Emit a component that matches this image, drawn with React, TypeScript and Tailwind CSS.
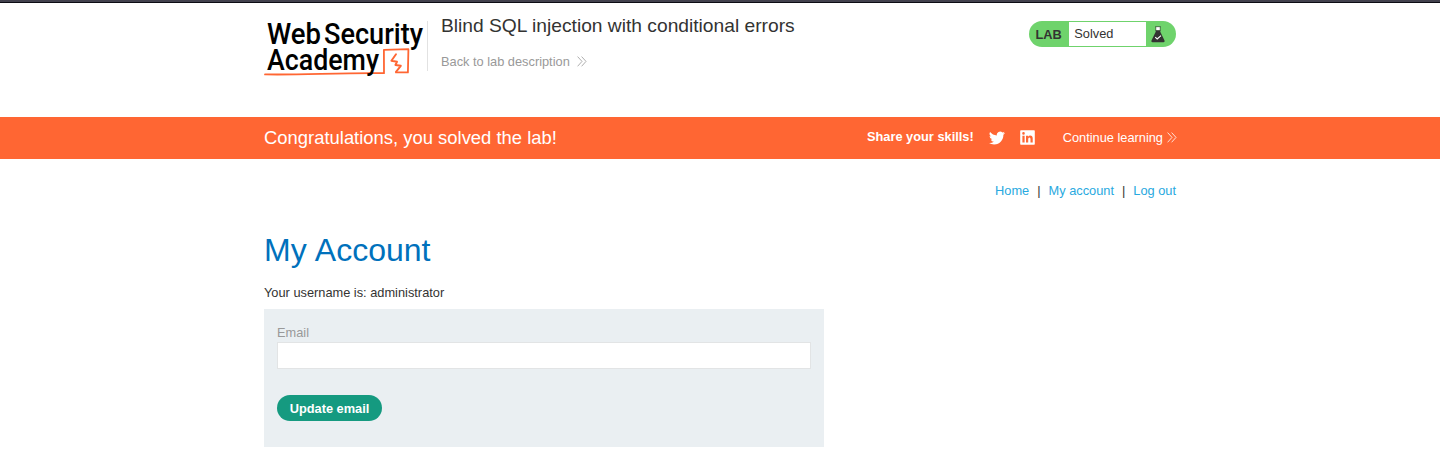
import React from "react";

function Chevrons({ className }: { className: string }) {
  return (
    <svg className={className} width="10" height="11" viewBox="0 0 10 11" fill="none" stroke="currentColor" strokeWidth="0.8">
      <path d="M0.6 0.6 5 5.4 0.6 10.3M4.6 0.6 9 5.4 4.6 10.3" />
    </svg>
  );
}

function Logo() {
  return (
    <svg
      width="163"
      height="60"
      viewBox="264 18 163 60"
      className="block overflow-visible font-['Roboto','Liberation_Sans',sans-serif]"
      role="img"
      aria-label="Web Security Academy"
    >
      <g fill="none" stroke="#ff6633" strokeLinecap="round" strokeLinejoin="round">
        <path strokeWidth="1.8" d="M265 74.4C300 75.2 340 72.6 384 73.2L383.9 49.8 408.4 49.2 407.9 72.4 396 72.4" />
        <path strokeWidth="1.9" d="M396 54.2 391.4 60.8 397 61.8 395.4 65 400.8 65.8 396 71.8" />
      </g>
      <g fill="#000" fontSize="30" fontWeight="500">
        <text x="267" y="43.8" textLength="54" lengthAdjust="spacingAndGlyphs">Web</text>
        <text x="324" y="43.8" textLength="99" lengthAdjust="spacingAndGlyphs">Security</text>
        <text x="267" y="70" textLength="112" lengthAdjust="spacingAndGlyphs">Academy</text>
      </g>
    </svg>
  );
}

function Flask() {
  return (
    <svg width="14" height="17" viewBox="0 0 14 17">
      <path d="M5 1h4v3.4H5z" fill="#fff" />
      <path d="M4 0.7h6M4.8 1v4M9.2 1v4" stroke="#333332" strokeWidth="0.6" fill="none" />
      <path d="M4.7 4.2h4.6v1.6l4.1 8.4q.7 2-1 2H1.6q-1.7 0-1-2l4.1-8.4z" fill="#333332" />
      <path d="m4.2 11.2 2 1.8 3.8-3.4" stroke="#fff" strokeWidth="1.1" fill="none" />
    </svg>
  );
}

function TwitterIcon() {
  return (
    <svg width="16" height="16" viewBox="0 0 24 24" fill="#fff">
      <path d="M23.95 4.57a10 10 0 0 1-2.82.77 4.96 4.96 0 0 0 2.16-2.72c-.95.55-2 .95-3.13 1.18a4.92 4.92 0 0 0-8.38 4.48C7.69 8.1 4.07 6.13 1.64 3.16a4.92 4.92 0 0 0 1.52 6.57 4.9 4.9 0 0 1-2.23-.61v.06a4.92 4.92 0 0 0 3.95 4.83 5 5 0 0 1-2.21.08 4.94 4.94 0 0 0 4.6 3.42A9.87 9.87 0 0 1 0 19.54a13.99 13.99 0 0 0 7.55 2.21c9.05 0 14-7.5 14-13.98 0-.21 0-.42-.02-.63a9.94 9.94 0 0 0 2.46-2.55z" />
    </svg>
  );
}

function LinkedInIcon() {
  return (
    <svg width="15" height="15" viewBox="0 0 15 15">
      <rect x="0.2" y="0.2" width="14.6" height="14.6" rx="0.8" fill="#fff" />
      <path
        d="M2.4 5.8h2.2v6.8H2.4zM2.2 3.4a1.3 1.3 0 1 1 2.6 0 1.3 1.3 0 1 1-2.6 0M6 5.8h2.1v.9q.7-1.1 2.1-1.1 2.5 0 2.5 2.9v4.1h-2.2V9q0-1.6-1.1-1.6-1.2 0-1.2 1.6v3.6H6z"
        fill="#ff6633"
      />
    </svg>
  );
}

export default function App() {
  return (
    <div className="h-[452px] overflow-hidden bg-white font-['Liberation_Sans',Arial,sans-serif] text-[12.8px] leading-4 text-[#333332]">
      <div className="h-[3px] border-b border-[#0c0c14] bg-[#42414d]" />
      <header className="mx-auto flex h-[114px] w-[912px] items-start">
        <div className="pt-[15px]">
          <Logo />
        </div>
        <div className="mt-[18px] h-[50px] w-px bg-[#e2e2e2]" />
        <div className="ml-[13px] flex-1 pt-[11px]">
          <h2 className="text-[19.22px] leading-6">Blind SQL injection with conditional errors</h2>
          <a href="#" className="mt-4 flex items-center text-[#999]">
            Back to lab description
            <Chevrons className="-mt-[2px] ml-[7px]" />
          </a>
        </div>
        <div className="mt-[18px] flex h-[26px] w-[147px] items-center overflow-hidden rounded-full bg-[#6fd36c]">
          <span className="w-10 pt-px pl-[6.5px] font-bold">LAB</span>
          <span className="h-6 w-[77px] bg-white pl-[5.25px] leading-6">Solved</span>
          <span className="pl-[5px]">
            <Flask />
          </span>
        </div>
      </header>
      <section className="bg-[#ff6633] text-white">
        <div className="mx-auto flex h-[42px] w-[912px] items-center">
          <h4 className="flex-1 text-[18.43px]">Congratulations, you solved the lab!</h4>
          <span className="-mt-[2px] font-bold">Share your skills!</span>
          <span className="-mt-px ml-[15px]">
            <TwitterIcon />
          </span>
          <span className="-mt-px ml-[15.5px]">
            <LinkedInIcon />
          </span>
          <a href="#" className="-mr-[0.5px] ml-[27.5px] flex items-center">
            Continue learning
            <Chevrons className="-mt-px ml-[3.5px]" />
          </a>
        </div>
      </section>
      <main className="mx-auto w-[912px]">
        <nav className="flex justify-end gap-2 pt-6">
          <a href="#" className="text-[#29a9e0]">Home</a>
          <span>|</span>
          <a href="#" className="text-[#29a9e0]">My account</a>
          <span>|</span>
          <a href="#" className="text-[#29a9e0]">Log out</a>
        </nav>
        <h1 className="mt-[31px] text-[32px] leading-10 text-[#0071bc] [word-spacing:1px]">My Account</h1>
        <p className="mt-[15px]">Your username is: administrator</p>
        <form className="mt-2 h-[138px] w-[560px] bg-[#eaeff2] px-[13px] pt-4">
          <label className="block text-[#999]" htmlFor="email">Email</label>
          <input id="email" className="mt-px block h-[27px] w-full border border-[#e2e4e5] bg-white px-2 outline-none" />
          <button type="button" className="mt-[26px] block h-[26px] w-[105px] rounded-full bg-[#159a80] pt-[2px] font-bold text-white">
            Update email
          </button>
        </form>
      </main>
    </div>
  );
}
